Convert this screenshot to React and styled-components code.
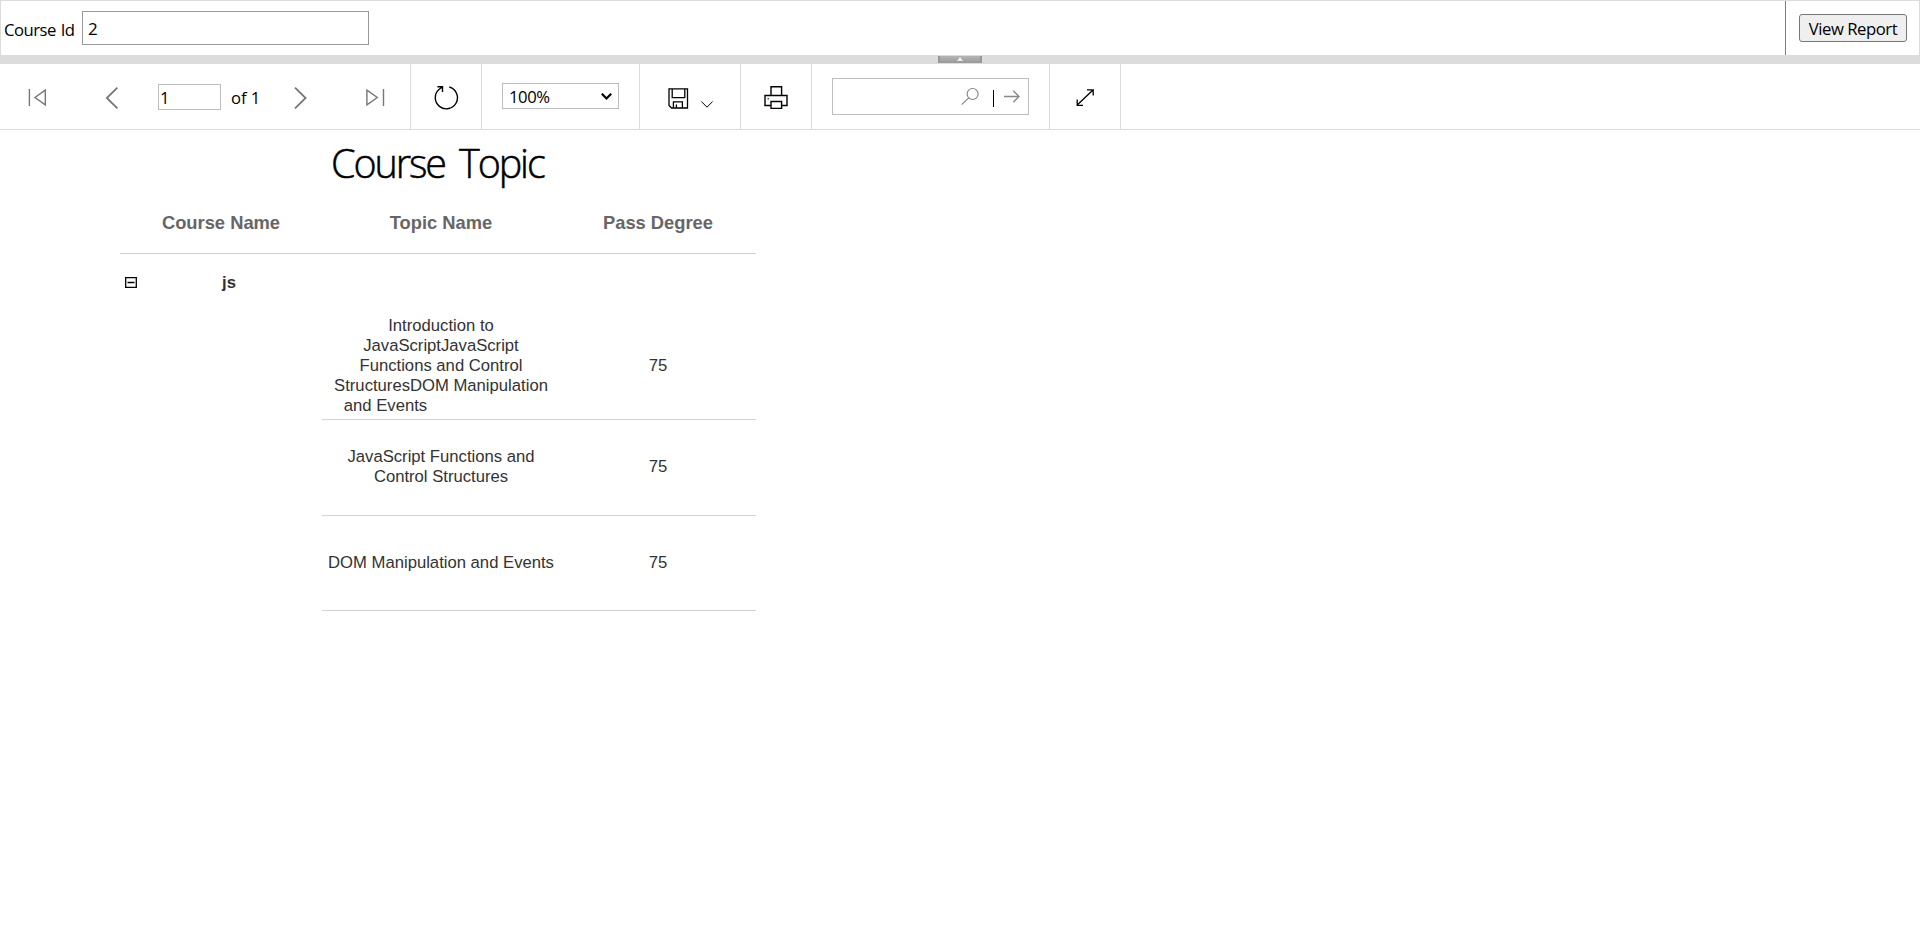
import React from "react";
import styled, { createGlobalStyle } from "styled-components";

const GlobalStyle = createGlobalStyle`
  *, *::before, *::after { box-sizing: border-box; }
  body { margin: 0; background: #fff; color: #000; font-family: "Segoe UI", "Open Sans", sans-serif; }
  input, select, button { font-family: inherit; margin: 0; outline: none; }
  svg { display: block; overflow: visible; }
`;

const Viewer = styled.div`
  display: flex;
  flex-direction: column;
  width: 100%;
  height: 933px;
  overflow: hidden;
`;

const Parameters = styled.form`
  display: flex;
  height: 55px;
  border: 1px solid #dcdcdc;
  border-bottom: 0;
`;

const ParameterFields = styled.div`
  flex: 1;
  display: flex;
  align-items: flex-start;
  padding: 10px 0 0 3px;
`;

const ParameterLabel = styled.label`
  width: 78px;
  padding-top: 8px;
  font-size: 16.67px;
  line-height: 22px;
  letter-spacing: -0.5px;
  word-spacing: 1px;
  white-space: nowrap;
`;

const ParameterInput = styled.input`
  width: 287px;
  height: 34px;
  padding: 1px 5px 0;
  border: 1px solid #999;
  font-size: 17px;
`;

const SubmitCell = styled.div`
  width: 134px;
  padding: 13px 0 0 13px;
  border-left: 1px solid #808080;
`;

const SubmitButton = styled.button`
  width: 108px;
  height: 28px;
  padding: 1px 0 0;
  border: 1px solid #767676;
  border-radius: 3px;
  background: #efefef;
  color: #000;
  font-size: 16.67px;
  line-height: 25px;
  letter-spacing: -0.45px;
  white-space: nowrap;
`;

const Splitter = styled.div`
  display: flex;
  justify-content: center;
  height: 9px;
  padding-top: 1px;
  background: #dcdcdc;
`;

const SplitterHandle = styled.div`
  display: flex;
  justify-content: center;
  width: 44px;
  height: 7px;
  padding-top: 1px;
  border: solid #999;
  border-width: 0 2px;
  background: linear-gradient(#b5b5b5, #999);
`;

const Toolbar = styled.div`
  display: flex;
  height: 66px;
  border-bottom: 1px solid #dcdcdc;
`;

const ToolGroup = styled.div`
  display: flex;
  align-items: flex-start;
  width: ${(p) => p.$width}px;
  padding-left: ${(p) => p.$inset}px;
  border-right: 1px solid #dcdcdc;
`;

const Tool = styled.div`
  flex: none;
  width: ${(p) => p.$width}px;
  padding-top: ${(p) => p.$top}px;
`;

const PageInput = styled.input`
  width: 63px;
  height: 26px;
  margin-top: 20px;
  padding: 0 1px;
  border: 1px solid #bdbdbd;
  font-size: 16.67px;
`;

const PageCount = styled.span`
  width: 63px;
  padding: 22px 0 0 10px;
  font-size: 16.67px;
  line-height: 24px;
  letter-spacing: -0.1px;
  white-space: nowrap;
`;

const ZoomSelect = styled.select`
  width: 117px;
  height: 26px;
  margin-top: 19px;
  padding: 1px 0 0 6px;
  border: 1px solid #bdbdbd;
  border-radius: 0;
  background: #fff;
  color: #000;
  font-size: 16.67px;
  letter-spacing: -0.4px;
  appearance: none;
`;

const SelectArrow = styled.div`
  width: 0;
  padding-top: 29px;

  svg { margin-left: -18px; pointer-events: none; }
`;

const SearchBox = styled.div`
  display: flex;
  align-items: center;
  justify-content: flex-end;
  width: 197px;
  height: 37px;
  margin-top: 14px;
  padding-right: 8px;
  border: 1px solid #bdbdbd;
`;

const SearchDivider = styled.span`
  width: 1.5px;
  height: 17px;
  margin: 4px 10px 0 14px;
  background: #000;
`;

const Report = styled.main`
  width: 636px;
  margin-left: 120px;
  color: #333;
  font-family: Arial, "Liberation Sans", sans-serif;
  font-size: 16.67px;
  line-height: 20px;
`;

const Title = styled.h1`
  margin: 0;
  height: 71px;
  padding: 7px 0 0 211px;
  color: #000;
  font: 300 39.5px/52px "Segoe UI Light", "Open Sans", sans-serif;
  letter-spacing: -2.1px;
  word-spacing: 6px;
  -webkit-text-stroke: 0.5px #000;
  white-space: nowrap;
`;

const HeaderRow = styled.div`
  display: grid;
  grid-template-columns: 202px 238px 196px;
  height: 53px;
  padding-top: 12px;
  border-bottom: 1px solid #d3d3d3;
  color: #666;
  font-size: 18.33px;
  font-weight: bold;
  line-height: 20px;
  text-align: center;
`;

const GroupRow = styled.div`
  display: flex;
  align-items: center;
  height: 60px;
  padding: 0 0 3px 5px;
  font-weight: bold;
`;

const GroupName = styled.span`
  margin: 1px 0 0 85px;
`;

const DetailRow = styled.div`
  display: grid;
  grid-template-columns: 238px 196px;
  align-items: center;
  height: ${(p) => p.$height}px;
  margin-left: 202px;
  padding-bottom: ${(p) => p.$lift || 0}px;
  border-bottom: 1px solid #d3d3d3;
  text-align: center;
`;

const Line = styled.div`
  white-space: nowrap;
  padding-right: ${(p) => p.$trail || 0}px;
`;

const Icon = ({ w, h, color = "#000", stroke = 1.4, children }) => (
  <svg width={w} height={h} viewBox={`0 0 ${w} ${h}`} fill="none" stroke={color} strokeWidth={stroke}>
    {children}
  </svg>
);

const NAV = "#777";

const rows = [
  {
    height: 106,
    lift: 2,
    lines: ["Introduction to", "JavaScriptJavaScript", "Functions and Control", "StructuresDOM Manipulation", "and Events"],
    trail: 111,
    degree: 75,
  },
  { height: 96, lift: 2, lines: ["JavaScript Functions and", "Control Structures"], degree: 75 },
  { height: 95, lines: ["DOM Manipulation and Events"], degree: 75 },
];

export default function App() {
  return (
    <Viewer>
      <GlobalStyle />
      <Parameters onSubmit={(e) => e.preventDefault()}>
        <ParameterFields>
          <ParameterLabel htmlFor="course">Course Id</ParameterLabel>
          <ParameterInput id="course" defaultValue="2" />
        </ParameterFields>
        <SubmitCell>
          <SubmitButton>View Report</SubmitButton>
        </SubmitCell>
      </Parameters>
      <Splitter>
        <SplitterHandle>
          <Icon w={6} h={4} stroke={0}>
            <path d="M3 0 6 4H0Z" fill="#eee" />
          </Icon>
        </SplitterHandle>
      </Splitter>

      <Toolbar>
        <ToolGroup $width={411} $inset={28}>
          <Tool $width={77} $top={25}>
            <Icon w={19} h={17} color={NAV}>
              <path d="M1.4 0V17M17.3 1.2V15.8L7 8.5Z" />
            </Icon>
          </Tool>
          <Tool $width={53} $top={23}>
            <Icon w={13} h={22} color={NAV} stroke={1.8}>
              <path d="M12.4.7 1.8 11 12.4 21.3" />
            </Icon>
          </Tool>
          <PageInput defaultValue="1" />
          <PageCount>of 1</PageCount>
          <Tool $width={10} $top={23} />
          <Tool $width={72} $top={23}>
            <Icon w={13} h={22} color={NAV} stroke={1.8}>
              <path d="M1 .7 11.6 11 1 21.3" />
            </Icon>
          </Tool>
          <Tool $width={19} $top={25}>
            <Icon w={19} h={17} color={NAV}>
              <path d="M17.5 0V17M.9 1.2V15.8L11.3 8.5Z" />
            </Icon>
          </Tool>
        </ToolGroup>
        <ToolGroup $width={71} $inset={23}>
          <Tool $width={24} $top={21}>
            <Icon w={24} h={24}>
              <path d="M15.3 2A11.1 11.1 0 1 1 5.2 4.2L8.3 2M3.4 1.7H8.5V7" />
            </Icon>
          </Tool>
        </ToolGroup>
        <ToolGroup $width={158} $inset={20}>
          <ZoomSelect defaultValue="100">
            <option value="100">100%</option>
          </ZoomSelect>
          <SelectArrow>
            <Icon w={11} h={7} stroke={2.2}>
              <path d="M.8.8 5.5 5.5 10.2.8" />
            </Icon>
          </SelectArrow>
        </ToolGroup>
        <ToolGroup $width={101} $inset={28}>
          <Tool $width={33} $top={24}>
            <Icon w={21} h={21} stroke={1.3}>
              <path d="M1 .9H19.5V20H3.6L1 17.4ZM4.2 1V9.6H16.8V1M5.4 20V13.8H14.4V20M8.4 20V16.5" />
            </Icon>
          </Tool>
          <Tool $width={12} $top={37}>
            <Icon w={12} h={7} stroke={1}>
              <path d="M.4.5 6 6.2 11.6.5" />
            </Icon>
          </Tool>
        </ToolGroup>
        <ToolGroup $width={71} $inset={23}>
          <Tool $width={24} $top={22}>
            <Icon w={24} h={24}>
              <path d="M7 9.5V.8H17.6V9.5M7 19.5H1V9.5H23V19.5H17.6M7 15.5H17.6V22.4H7Z" />
              <path d="M3.5 12.7H5" stroke="#258" />
            </Icon>
          </Tool>
        </ToolGroup>
        <ToolGroup $width={238} $inset={20}>
          <SearchBox>
            <Icon w={18} h={17} color="#888" stroke={1.2}>
              <circle cx="11.6" cy="6" r="5.5" />
              <path d="M7.7 9.9.7 16.6" />
            </Icon>
            <SearchDivider />
            <Icon w={16} h={13} color="#888" stroke={1.3}>
              <path d="M0 6.5H15M9.3.8 15 6.5 9.3 12.2" />
            </Icon>
          </SearchBox>
        </ToolGroup>
        <ToolGroup $width={71} $inset={26}>
          <Tool $width={18} $top={25}>
            <Icon w={18} h={17} stroke={1.3}>
              <path d="M1.2 16 17 1M11 .8H17.2V6.5M1.2 10.5V16.3H7" />
            </Icon>
          </Tool>
        </ToolGroup>
      </Toolbar>

      <Report>
        <Title>Course Topic</Title>
        <HeaderRow>
          <span>Course Name</span>
          <span>Topic Name</span>
          <span>Pass Degree</span>
        </HeaderRow>
        <GroupRow>
          <Icon w={12} h={11} stroke={1.3}>
            <path d="M.7.7H11.3V10.3H.7ZM2.5 5.5H9.5" />
          </Icon>
          <GroupName>js</GroupName>
        </GroupRow>
        {rows.map((row) => (
          <DetailRow key={row.lines[0]} $height={row.height} $lift={row.lift}>
            <div>
              {row.lines.map((line, i) => (
                <Line key={line} $trail={i === row.lines.length - 1 ? row.trail : 0}>
                  {line}
                </Line>
              ))}
            </div>
            <span>{row.degree}</span>
          </DetailRow>
        ))}
      </Report>
    </Viewer>
  );
}
